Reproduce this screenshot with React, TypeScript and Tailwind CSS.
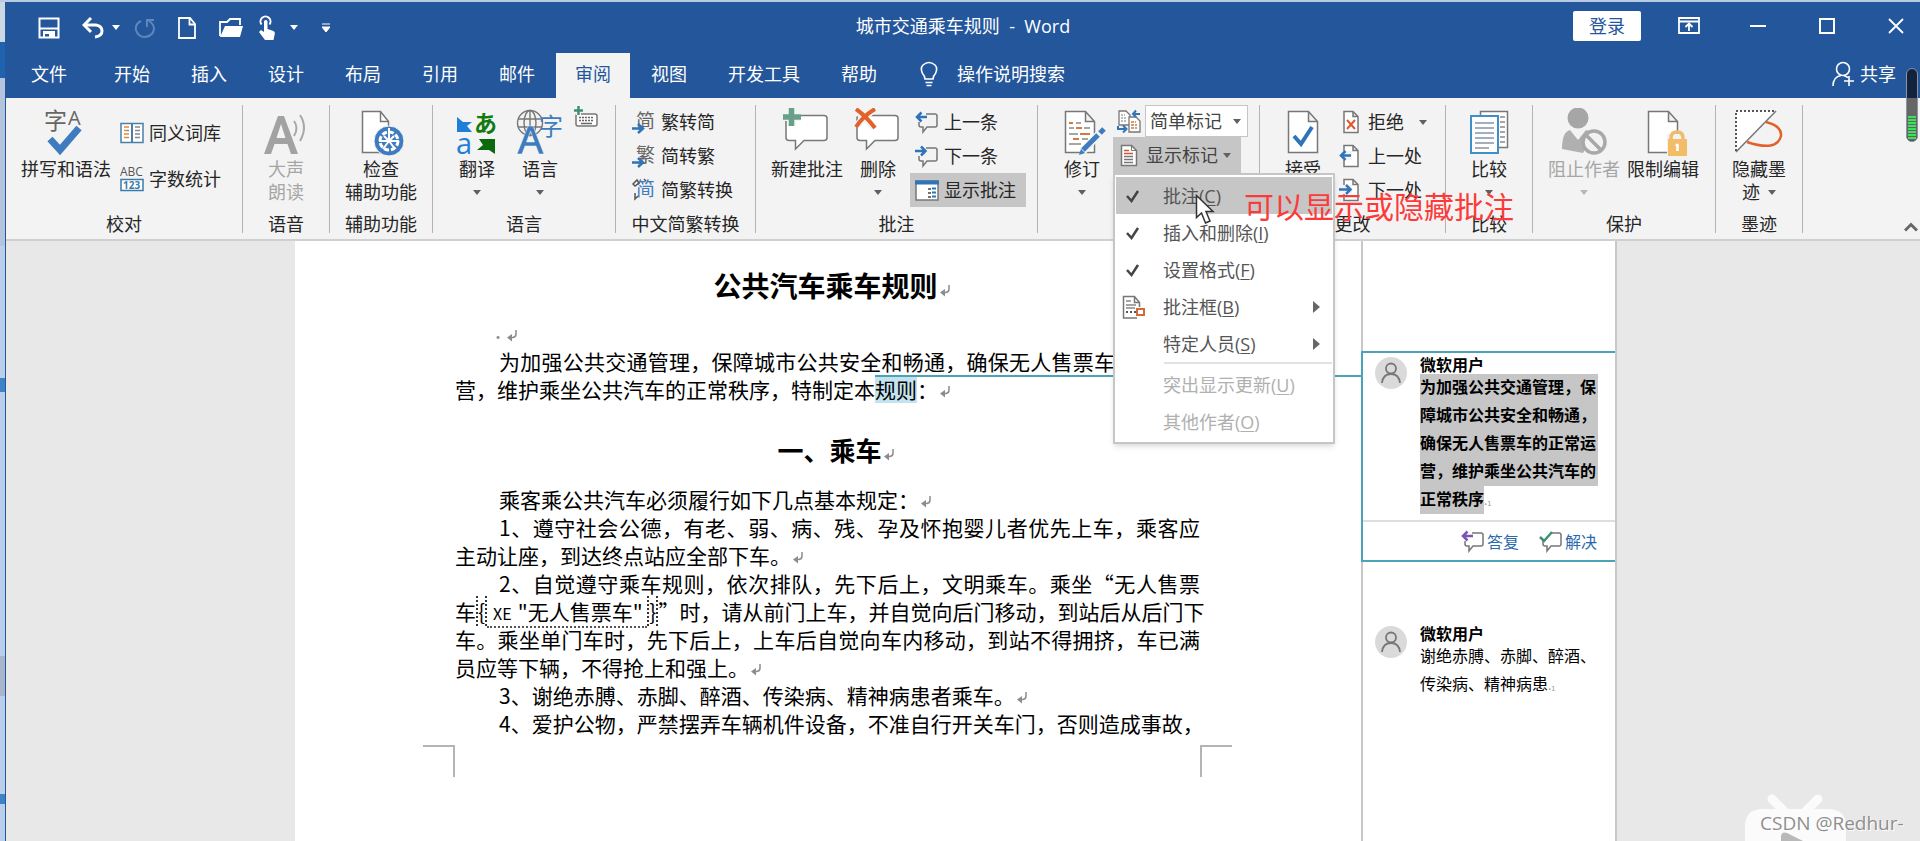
import React, { useState } from 'react';

const ui = 'font-["Open_Sans","Noto_Sans_CJK_SC",sans-serif]';

type IconProps = { children: React.ReactNode; w?: number; h?: number; className?: string };

function Icon({ children, w = 24, h = 24, className = '' }: IconProps) {
  return (
    <svg width={w} height={h} viewBox={`0 0 ${w} ${h}`} fill="none" className={`shrink-0 ${className}`} aria-hidden="true">
      {children}
    </svg>
  );
}

function Caret({ className = 'text-[#606060]' }: { className?: string }) {
  return (
    <Icon w={8} h={5} className={className}>
      <path d="M0 0h8L4 5z" fill="currentColor" />
    </Icon>
  );
}

/* ---------- ribbon drawings ---------- */

const BigPage = () => (
  <path d="M9.5 3.5h20l9 10v31h-29z M29.5 3.5v10h9" fill="#fff" stroke="#777" strokeWidth="1.5" />
);

const SpellingIcon = () => (
  <Icon w={48} h={48}>
    <text x="2" y="21" fontSize="23" fill="#666" fontFamily="Noto Sans CJK SC">字</text>
    <text x="26" y="17" fontSize="20" fill="#666" fontFamily="Open Sans">A</text>
    <path d="M8 31l10 11L37 20" stroke="#3f7cbf" strokeWidth="7" />
  </Icon>
);

const ThesaurusIcon = () => (
  <Icon>
    <rect x="1" y="2.5" width="22" height="19" fill="#fff" stroke="#4a7fa8" strokeWidth="1.5" />
    <path d="M12 2v20" stroke="#4a7fa8" strokeWidth="2" />
    <path d="M4 6h5M4 9.500h3M4 13h5M4 16.500h5" stroke="#e08a3c" strokeWidth="1.5" />
    <path d="M7 9.500h2M15 6h5M15 9.500h5M15 13h5M15 16.500h5" stroke="#888" strokeWidth="1.5" />
  </Icon>
);

const WordCountIcon = () => (
  <Icon h={26}>
    <text x="0" y="10" fontSize="12" fill="#555" fontFamily="Open Sans">ABC</text>
    <rect x="1" y="13.5" width="22" height="11" fill="#fff" stroke="#3b7bab" strokeWidth="1.5" />
    <text x="3" y="23" fontSize="10" fontWeight="700" fill="#3b7bab" fontFamily="Open Sans">123</text>
  </Icon>
);

const ReadAloudIcon = () => (
  <Icon w={48} h={48}>
    <path d="M2 46L16 8h6l14 38h-7l-3.500-10H12.500L9 46zM14.500 30h9L19 16z" fill="#a2a2a2" />
    <path d="M32 13q5 7 0 15M38 7q8 12 0 26" stroke="#a8a8a8" strokeWidth="2" />
  </Icon>
);

const AccessibilityIcon = () => (
  <Icon w={48} h={48}>
    <path d="M5.5 3.5h18l8 10v31h-26z" fill="#fff" stroke="#777" strokeWidth="1.5" />
    <path d="M23.5 3.5v10h8" stroke="#777" strokeWidth="1.5" />
    <circle cx="32" cy="33" r="15" fill="#3f7cbf" stroke="#f3f3f3" />
    <circle cx="32" cy="33" r="9" stroke="#fff" strokeWidth="3" strokeDasharray="5 2" />
    <path d="M32 20v12M27 28l5 5 5-5M32 33l-6 8M32 33l6 8M22 33h20" stroke="#fff" strokeWidth="2" />
  </Icon>
);

const TranslateIcon = () => (
  <Icon w={48} h={48}>
    <path d="M4 9l6 5h9l-5 4 5 6H4z" fill="#1d7fd8" />
    <text x="21" y="24" fontSize="23" fontWeight="700" fill="#107c10" fontFamily="Noto Sans CJK JP">あ</text>
    <text x="3" y="46" fontSize="29" fill="#1d7fd8" fontFamily="Open Sans">a</text>
    <path d="M26 31h16v15l-6-4H24l6-5z" fill="#0b6a0b" />
  </Icon>
);

const LanguageIcon = () => (
  <Icon w={48} h={48}>
    <g stroke="#777" strokeWidth="1.4">
      <circle cx="14" cy="15" r="12.5" />
      <ellipse cx="14" cy="15" rx="6" ry="12.5" />
      <path d="M14 2v25M2 11h24M2 19h24" />
    </g>
    <path d="M1 46l11-28h5l11 28h-5l-3-8H9l-3 8zM10.500 34h8l-4-11z" fill="#3f7cbf" stroke="#f3f3f3" strokeWidth="0.5" />
    <text x="23" y="27" fontSize="24" fill="#3f7cbf" fontFamily="Noto Sans CJK SC">字</text>
  </Icon>
);

const KeyboardIcon = () => (
  <Icon>
    <rect x="2" y="8" width="21" height="12" rx="2" fill="#fff" stroke="#777" strokeWidth="1.5" />
    <path d="M5 11.500h15M5 14.500h15" stroke="#666" strokeWidth="1.5" strokeDasharray="2 1" />
    <path d="M7 17.500h11" stroke="#666" strokeWidth="1.5" />
    <path d="M4.500 0v9M0 4.500h9" stroke="#f3f3f3" strokeWidth="5" />
    <path d="M4.500 0v9M0 4.500h9" stroke="#3f8f78" strokeWidth="2.5" />
  </Icon>
);

function HanIcon({ char, color, arrow }: { char: string; color: string; arrow?: boolean }) {
  return (
    <Icon>
      <text x="4" y="18" fontSize="19" fill={color} fontFamily="Noto Sans CJK SC">{char}</text>
      {arrow ? (
        <path d="M0 18.500h9M6 14l5 4.500L6 23" stroke="#2f74b8" strokeWidth="2.5" />
      ) : (
        <path d="M1 6l4-4 2 3-4 3zM12 1l2 2M3 15v6l3-3" stroke="#555" strokeWidth="1.5" />
      )}
    </Icon>
  );
}

const BubblePath = () => (
  <path d="M6 7.500h35q3 0 3 3v19q0 3-3 3H21L12.500 41v-8.500H6q-3 0-3-3v-19q0-3 3-3z" fill="#fff" stroke="#777" strokeWidth="1.5" />
);

const NewCommentIcon = () => (
  <Icon w={48} h={48}>
    <BubblePath />
    <path d="M8.500 0v18M0 9h18" stroke="#f3f3f3" strokeWidth="8" />
    <path d="M8.500 0v18M0 9h18" stroke="#69a08c" strokeWidth="5.5" />
  </Icon>
);

const DeleteIcon = () => (
  <Icon w={48} h={48}>
    <BubblePath />
    <path d="M2 2l19 18M20 1L2 18" stroke="#f3f3f3" strokeWidth="7" />
    <path d="M2 1q10 7 19 19M21 1Q9 8 2 19" stroke="#e2612b" strokeWidth="4" />
  </Icon>
);

function SmallBubble({ dir, mark = '#2f74b8' }: { dir: 'left' | 'right' | 'check'; mark?: string }) {
  return (
    <Icon>
      <path d="M11 4h9q2 0 2 2v9q0 2-2 2h-8l-4 5v-5H6q-2 0-2-2v-3" stroke="#777" strokeWidth="1.5" />
      {dir === 'left' && <path d="M12 7H3M6.500 2.500L2 7l4.500 4.500" stroke={mark} strokeWidth="2.5" />}
      {dir === 'right' && <path d="M0 7h9M6 2.500L10.500 7 6 11.500" stroke={mark} strokeWidth="2.5" />}
      {dir === 'check' && <path d="M1 8l4 4 8-9" stroke={mark} strokeWidth="2.5" />}
    </Icon>
  );
}

const ShowCommentsIcon = () => (
  <Icon>
    <rect x="1" y="3" width="22" height="19" fill="#fff" stroke="#777" strokeWidth="1.5" />
    <path d="M0 4.500h24" stroke="#2f74b8" strokeWidth="4" />
    <path d="M13 11h3M13 15h3M13 19h3" stroke="#444" strokeWidth="1.5" />
    <path d="M17 10.500h4M17 14.500h4M17 18.500h4" stroke="#2f74b8" strokeWidth="2" />
  </Icon>
);

const TrackIcon = () => (
  <Icon w={48} h={48}>
    <path d="M7.5 3.5h20l9 10v31h-29z M27.5 3.5v10h9" fill="#fff" stroke="#777" strokeWidth="1.5" />
    <path d="M11 15h4M18 20h6M22 26h10M15 31h6" stroke="#d27a45" strokeWidth="2" />
    <path d="M18 15h5M11 20h5M26 20h6M11 26h9M24 31h6M11 36h12" stroke="#888" strokeWidth="1.5" />
    <path d="M24 44L44 23" stroke="#f3f3f3" strokeWidth="8" />
    <path d="M25 42L40 27M42 25l4-4" stroke="#3f7cbf" strokeWidth="5" />
    <path d="M21 47l2-6 4 4z" fill="#3f7cbf" />
  </Icon>
);

const MarkupViewIcon = () => (
  <Icon>
    <path d="M2 2h7l4 4v10H2z" fill="#fff" stroke="#777" strokeWidth="1.3" />
    <path d="M12 8h7l4 4v11H12z" fill="#fff" stroke="#777" strokeWidth="1.3" />
    <path d="M4 6h4M4 9h6M4 12h6" stroke="#777" strokeDasharray="2 1" />
    <path d="M14 13h5M14 16h6M14 19h6" stroke="#d27a45" strokeWidth="1.3" strokeDasharray="3 1" />
    <path d="M23 5h-6M19 1.500L16 5l3 3M1 17v3h7M6 16.500l3.500 3.500L6 23.500" stroke="#2f74b8" strokeWidth="2" />
  </Icon>
);

const ShowMarkupIcon = () => (
  <Icon>
    <path d="M4.5 2.5h10l5 5v15h-15z" fill="#fff" stroke="#777" strokeWidth="1.5" />
    <path d="M14.5 2.5v5h5" stroke="#777" />
    <path d="M7 7.500h5M7 10.500h9" stroke="#d2562b" strokeWidth="1.5" />
    <path d="M7 13.500h9M7 16.500h9M7 19.500h9" stroke="#777" strokeWidth="1.3" />
  </Icon>
);

const AcceptIcon = () => (
  <Icon w={48} h={48}>
    <BigPage />
    <path d="M15 28l7 8 11-17" stroke="#2f74b8" strokeWidth="4" />
  </Icon>
);

function SmallPage({ kind }: { kind: 'reject' | 'prev' | 'next' }) {
  return (
    <Icon>
      <path d="M5 1.500h9l5 5v16H5z M14 1.500v5h5" fill="#fff" stroke="#777" strokeWidth="1.5" />
      {kind === 'reject' && <path d="M8 10l8 9M16 10l-8 9" stroke="#e2562b" strokeWidth="2" />}
      {kind !== 'reject' && <path d="M1 11.500h12" stroke="#f3f3f3" strokeWidth="9" />}
      {kind === 'prev' && <path d="M12 11.500H3M6.500 7L2 11.500 6.500 16" stroke="#2f74b8" strokeWidth="2.5" />}
      {kind === 'next' && <path d="M0 11.500h10M7 7l4.500 4.500L7 16" stroke="#2f74b8" strokeWidth="2.5" />}
    </Icon>
  );
}

const CompareIcon = () => (
  <Icon w={48} h={48}>
    <path d="M15.5 3.5h27v36h-27z" fill="#fff" stroke="#777" strokeWidth="1.5" />
    <path d="M35 9h5M35 14h5M35 19h5M35 24h5M35 29h5M35 34h5" stroke="#888" strokeWidth="1.5" />
    <path d="M6 8h27v37H6z" fill="#fff" stroke="#3f8fc8" strokeWidth="2" />
    <path d="M10 15h19M10 20h19M10 25h19M10 30h19M10 35h19M10 40h14" stroke="#8497a8" strokeWidth="1.5" />
  </Icon>
);

const BlockIcon = () => (
  <Icon w={48} h={48}>
    <circle cx="18" cy="10" r="10.5" fill="#a6a6a6" />
    <path d="M2 41q0-17 8-19l8 10 8-10q5 1 7 6l-10 17z" fill="#b0b0b0" />
    <circle cx="34" cy="34" r="11" fill="#f3f3f3" stroke="#a8a8a8" strokeWidth="3.5" />
    <path d="M26 27l15 15" stroke="#a8a8a8" strokeWidth="3.5" />
  </Icon>
);

const RestrictIcon = () => (
  <Icon w={48} h={48}>
    <BigPage />
    <path d="M28 26h22v22H28z" fill="#f3f3f3" />
    <path d="M32 34v-4q0-6 6-6t6 6v4" stroke="#eebd6c" strokeWidth="3.5" />
    <rect x="29" y="31" width="19" height="17" fill="#f2bd66" />
    <path d="M38.500 36v7M36.500 37h3" stroke="#fff" strokeWidth="2.5" />
  </Icon>
);

const InkIcon = () => (
  <Icon w={48} h={48}>
    <path d="M1 3h40L1 43z" fill="#fff" />
    <path d="M1 43V3h40" stroke="#555" strokeWidth="2" strokeDasharray="2 2" />
    <path d="M1 44L41 3" stroke="#777" strokeWidth="1.5" />
    <path d="M31 14q16 4 15 14Q42 44 12 34" stroke="#e2612b" strokeWidth="2.5" />
  </Icon>
);

/* ---------- ribbon building blocks ---------- */

function Group({ label, className, children }: { label: string; className: string; children: React.ReactNode }) {
  return (
    <section aria-label={label} className={`flex h-32 shrink-0 flex-col justify-between border-r border-[#b4b4b4] ${className}`}>
      <div className="flex h-[102px] items-start">{children}</div>
      <div className="text-center leading-[18px] whitespace-nowrap text-[#262626]">{label}</div>
    </section>
  );
}

type BigProps = { icon: React.ReactNode; lines: string[]; caret?: boolean; disabled?: boolean; className?: string };

function BigButton({ icon, lines, caret, disabled, className = '' }: BigProps) {
  return (
    <button
      type="button"
      disabled={disabled}
      className={`flex shrink-0 flex-col items-center pt-[3px] leading-[23px] whitespace-nowrap ${disabled ? 'text-[#a6a6a6]' : 'text-[#262626]'} ${className}`}
    >
      {icon}
      <span className="mt-0.5">{lines[0]}</span>
      <span className="flex h-[23px] items-center gap-2">
        {lines[1]}
        {caret && <Caret className={disabled ? 'text-[#b8b8b8]' : 'text-[#606060]'} />}
      </span>
    </button>
  );
}

function SmallButton({ icon, text, caret, className = 'h-[34px]' }: { icon: React.ReactNode; text: string; caret?: boolean; className?: string }) {
  return (
    <button type="button" className={`flex shrink-0 items-center gap-[5px] whitespace-nowrap text-[#262626] ${className}`}>
      {icon}
      <span>{text}</span>
      {caret && <span className="pl-2.5"><Caret /></span>}
    </button>
  );
}

/* ---------- markup menu ---------- */

type Item = { text: string; hotkey: string; checked?: boolean; sub?: boolean; disabled?: boolean; icon?: boolean };

const menuItems: Item[] = [
  { text: '批注', hotkey: 'C', checked: true },
  { text: '插入和删除', hotkey: 'I', checked: true },
  { text: '设置格式', hotkey: 'F', checked: true },
  { text: '批注框', hotkey: 'B', sub: true, icon: true },
  { text: '特定人员', hotkey: 'S', sub: true },
  { text: '突出显示更新', hotkey: 'U', disabled: true },
  { text: '其他作者', hotkey: 'O', disabled: true },
];

function MarkupMenu() {
  const [hovered, setHovered] = useState('C');

  return (
    <div role="menu" className="absolute top-full left-0 z-20 w-[222px] border-2 border-[#c6c6c6] bg-white px-px py-0.5 shadow-md">
      {menuItems.map((item) => (
        <React.Fragment key={item.hotkey}>
          {item.hotkey === 'U' && <div className="mb-0.5 ml-12 h-0.5 bg-[#e1e1e1]" />}
          <button
            type="button"
            role="menuitem"
            disabled={item.disabled}
            onMouseEnter={() => setHovered(item.hotkey)}
            className={`flex h-[37px] w-full items-center pr-3 whitespace-nowrap ${hovered === item.hotkey ? 'bg-[#c6c6c6]' : ''} ${item.disabled ? 'text-[#b0b0b0]' : 'text-[#555]'}`}
          >
            <span className="flex w-[47px] shrink-0 pl-1.5">
              {item.checked && (
                <Icon>
                  <path d="M5 12l4.500 5L16 7" stroke="#444" strokeWidth="2.5" />
                </Icon>
              )}
              {item.icon && (
                <Icon>
                  <path d="M15 23H1.500V1.500h11l5 6V12M12.500 1.500v6h5" fill="#fff" stroke="#777" strokeWidth="1.5" />
                  <path d="M4 6h5M4 10h10M4 13h9" stroke="#888" strokeWidth="1.5" />
                  <path d="M4 17h10" stroke="#555" strokeWidth="2" strokeDasharray="2 2" />
                  <rect x="15" y="14" width="7" height="6" fill="#fff" stroke="#cf6b3a" strokeWidth="2" />
                </Icon>
              )}
            </span>
            <span>
              {item.text}(<u className="underline-offset-2">{item.hotkey}</u>)
            </span>
            {item.sub && (
              <Icon w={7} h={12} className="ml-auto">
                <path d="M0 0l7 6-7 6z" fill="#666" />
              </Icon>
            )}
          </button>
        </React.Fragment>
      ))}
    </div>
  );
}

/* ---------- window chrome ---------- */

function TitleBar() {
  return (
    <header className="relative flex h-[51px] items-center justify-between pb-1 text-white">
      <div className="flex items-center pt-1 pl-8">
        <button type="button" aria-label="保存">
          <Icon w={22} h={22}>
            <path d="M1.500 1.500h19v19h-19z" stroke="#fff" strokeWidth="2" />
            <path d="M2 11.500h18M6 21v-6h10v6" stroke="#fff" strokeWidth="2" />
            <path d="M7 15h8v2H7zM11 17h4v4h-4z" fill="#fff" />
          </Icon>
        </button>
        <button type="button" aria-label="撤消" className="ml-[22px] flex items-center gap-2">
          <Icon w={22} h={22}>
            <path d="M2 8h12q6 1 6 6t-7 6" stroke="#fff" strokeWidth="3" />
            <path d="M9 1L2 8l7 7" stroke="#fff" strokeWidth="3" />
          </Icon>
          <Icon w={8} h={5}><path d="M0 0h8L4 5z" fill="#fff" /></Icon>
        </button>
        <button type="button" aria-label="恢复" className="ml-3.5" disabled>
          <Icon w={22} h={22}>
            <path d="M7 4q-6 3-5 9 2 7 9 7 8-1 9-8 0-5-5-8" stroke="#5f86bd" strokeWidth="2" />
            <path d="M13 10V3h7" stroke="#5f86bd" strokeWidth="2" />
          </Icon>
        </button>
        <button type="button" aria-label="新建" className="ml-5">
          <Icon w={22} h={22}>
            <path d="M3 1h11l5 6v14H3z M13.500 1v6.500H19" stroke="#fff" strokeWidth="1.8" />
          </Icon>
        </button>
        <button type="button" aria-label="打开" className="ml-5">
          <Icon w={26} h={22}>
            <path d="M2 19V5h7l3-3h10v6" stroke="#fff" strokeWidth="1.8" />
            <path d="M7 9h18l-3 11H2z" fill="#fff" />
          </Icon>
        </button>
        <button type="button" aria-label="触摸/鼠标模式" className="ml-3 flex items-center gap-3">
          <Icon w={22} h={26}>
            <path d="M5.500 9.500a5 5 0 1 1 8 0" stroke="#fff" strokeWidth="2" />
            <path d="M8 6q2-2 3.500 0v8l6 2q2 1 1 4l-1 5H9l-6-8 2-2 3 2z" fill="#fff" />
          </Icon>
          <Icon w={8} h={5}><path d="M0 0h8L4 5z" fill="#fff" /></Icon>
        </button>
        <button type="button" aria-label="自定义快速访问工具栏" className="ml-6">
          <Icon w={8} h={10}><path d="M0 1h8M0 4h8l-4 5z" stroke="#fff" fill="#fff" /></Icon>
        </button>
      </div>

      <h1 className="absolute left-1/2 -translate-x-1/2 text-lg leading-6 whitespace-pre">城市交通乘车规则  -  Word</h1>

      <div className="flex items-center">
        <button type="button" className="h-[30px] rounded-xs bg-white px-4 text-lg leading-none text-[#24569b]">登录</button>
        <button type="button" aria-label="功能区显示选项" className="ml-[37px]">
          <Icon w={22} h={18}>
            <path d="M1 1h20v15H1zM1 4.500h20" stroke="#fff" strokeWidth="1.8" />
            <path d="M11 14V7M7.500 10L11 6.500l3.500 3.500" stroke="#fff" strokeWidth="1.8" />
          </Icon>
        </button>
        <button type="button" aria-label="最小化" className="ml-[50px]">
          <Icon w={16} h={16}><path d="M0 8h16" stroke="#fff" strokeWidth="2" /></Icon>
        </button>
        <button type="button" aria-label="最大化" className="ml-[53px]">
          <Icon w={16} h={16}><path d="M1 1h14v14H1z" stroke="#fff" strokeWidth="2" /></Icon>
        </button>
        <button type="button" aria-label="关闭" className="mr-4 ml-[53px]">
          <Icon w={16} h={16}><path d="M1 1l14 14M15 1L1 15" stroke="#fff" strokeWidth="1.8" /></Icon>
        </button>
      </div>
    </header>
  );
}

const tabs = ['开始', '插入', '设计', '布局', '引用', '邮件', '审阅', '视图', '开发工具', '帮助'];

function TabRow() {
  const [active, setActive] = useState('审阅');

  return (
    <nav className="flex h-[45px] items-stretch text-lg leading-none text-white">
      <button type="button" className="mr-[7px] pr-5 pb-1 pl-[25px]">文件</button>
      <div className="flex gap-px">
        {tabs.map((tab) => (
          <button
            key={tab}
            type="button"
            onClick={() => setActive(tab)}
            className={tab === active ? 'bg-[#f3f3f3] px-[19px] pb-1 text-[#24569b]' : 'px-5 pb-1'}
          >
            {tab}
          </button>
        ))}
      </div>
      <button type="button" className="ml-[22px] flex items-center gap-[18px] pb-1">
        <Icon w={20} h={26}>
          <path d="M6 18q0-3-2.500-5.500Q1 7 4 4q6-5 12 0 3 3 .5 8.500Q14 15 14 18zM6.500 21.500h7M7.500 24.500h5" stroke="#fff" strokeWidth="1.6" />
        </Icon>
        操作说明搜索
      </button>
      <button type="button" className="mr-6 ml-auto flex items-center gap-1 pb-1">
        <Icon w={24} h={26}>
          <circle cx="11" cy="8" r="6.5" stroke="#fff" strokeWidth="1.6" />
          <path d="M1 25q0-9 8-10.500M12 14.500l4 2M17 15v10M12 20h10" stroke="#fff" strokeWidth="1.6" />
        </Icon>
        共享
      </button>
    </nav>
  );
}

function Ribbon() {
  return (
    <div className="relative flex h-[143px] border-b-2 border-[#d0d0d0] bg-[#f3f3f3] py-[7px] text-lg leading-none">
      <Group label="校对" className="w-[237px]">
        <BigButton icon={<SpellingIcon />} lines={['拼写和语法']} className="ml-[15px]" />
        <div className="ml-[9px] flex flex-col pt-[5px]">
          <SmallButton icon={<ThesaurusIcon />} text="同义词库" className="h-[46px]" />
          <SmallButton icon={<WordCountIcon />} text="字数统计" className="h-[46px]" />
        </div>
      </Group>
      <Group label="语音" className="w-[87px]">
        <BigButton icon={<ReadAloudIcon />} lines={['大声', '朗读']} disabled className="mx-auto" />
      </Group>
      <Group label="辅助功能" className="w-[103px]">
        <BigButton icon={<AccessibilityIcon />} lines={['检查', '辅助功能']} className="mx-auto" />
      </Group>
      <Group label="语言" className="w-[183px]">
        <BigButton icon={<TranslateIcon />} lines={['翻译']} caret className="ml-5" />
        <BigButton icon={<LanguageIcon />} lines={['语言']} caret className="ml-[15px]" />
        <button type="button" aria-label="更新输入法词典" className="ml-2.5 flex pt-px"><KeyboardIcon /></button>
      </Group>
      <Group label="中文简繁转换" className="w-[140px]">
        <div className="ml-4 flex flex-col">
          <SmallButton icon={<HanIcon char="简" color="#666" arrow />} text="繁转简" />
          <SmallButton icon={<HanIcon char="繁" color="#666" arrow />} text="简转繁" />
          <SmallButton icon={<HanIcon char="简" color="#3f7cbf" />} text="简繁转换" />
        </div>
      </Group>
      <Group label="批注" className="w-[282px]">
        <BigButton icon={<NewCommentIcon />} lines={['新建批注']} className="ml-[15px]" />
        <BigButton icon={<DeleteIcon />} lines={['删除']} caret className="ml-[11px]" />
        <div className="ml-2 flex flex-col">
          <SmallButton icon={<SmallBubble dir="left" />} text="上一条" className="h-[34px] pl-[5px]" />
          <SmallButton icon={<SmallBubble dir="right" />} text="下一条" className="h-[34px] pl-[5px]" />
          <SmallButton icon={<ShowCommentsIcon />} text="显示批注" className="h-[34px] bg-[#c6c6c6] pr-2.5 pl-[5px]" />
        </div>
      </Group>
      <Group label="修订" className="w-[222px]">
        <BigButton icon={<TrackIcon />} lines={['修订']} caret className="ml-5" />
        <div className="ml-[7px] flex flex-col">
          <div className="flex h-8 items-center gap-1 pl-1">
            <MarkupViewIcon />
            <label className="relative flex items-center">
              <span className="sr-only">显示以供审阅</span>
              <select className="h-8 w-[103px] appearance-none border border-[#c6c6c6] bg-white pl-1 text-lg leading-none text-[#444] outline-none">
                <option>简单标记</option>
              </select>
              <span className="pointer-events-none absolute right-[7px]"><Caret /></span>
            </label>
          </div>
          <div className="relative">
            <button type="button" aria-haspopup="menu" className="flex h-9 items-center gap-[5px] bg-[#c6c6c6] pr-2.5 pl-1 whitespace-nowrap text-[#444]">
              <ShowMarkupIcon />
              显示标记
              <Caret />
            </button>
            <MarkupMenu />
          </div>
        </div>
      </Group>
      <Group label="更改" className="w-[186px]">
        <BigButton icon={<AcceptIcon />} lines={['接受']} className="ml-[19px]" />
        <div className="ml-3 flex flex-col">
          <SmallButton icon={<SmallPage kind="reject" />} text="拒绝" caret />
          <SmallButton icon={<SmallPage kind="prev" />} text="上一处" />
          <SmallButton icon={<SmallPage kind="next" />} text="下一处" />
        </div>
      </Group>
      <Group label="比较" className="w-[87px]">
        <BigButton icon={<CompareIcon />} lines={['比较']} caret className="mx-auto" />
      </Group>
      <Group label="保护" className="w-[183px]">
        <BigButton icon={<BlockIcon />} lines={['阻止作者']} caret disabled className="ml-[15px]" />
        <BigButton icon={<RestrictIcon />} lines={['限制编辑']} className="ml-[7px]" />
      </Group>
      <Group label="墨迹" className="w-[87px]">
        <BigButton icon={<InkIcon />} lines={['隐藏墨', '迹']} caret className="mx-auto" />
      </Group>
      <button type="button" aria-label="折叠功能区" className="mt-auto mr-0.5 ml-auto">
        <Icon w={14} h={10}><path d="M1 8.500l6-6 6 6" stroke="#666" strokeWidth="3" /></Icon>
      </button>
      <p className="pointer-events-none absolute top-[94px] left-[1238px] z-30 text-[30px] leading-[30px] whitespace-nowrap text-[#fb3b3b]">
        可以显示或隐藏批注
      </p>
    </div>
  );
}

/* ---------- document ---------- */

function Return() {
  return (
    <Icon w={10} h={12} className="ml-0.5 inline-block align-baseline text-[#8c8c8c]">
      <path d="M9 0v4q0 3-3 3.500H3" stroke="currentColor" strokeWidth="1.5" />
      <path d="M0 7.500L5 4v7.500z" fill="currentColor" />
    </Icon>
  );
}

function Line({ children, indent, full }: { children: React.ReactNode; indent?: boolean; full?: boolean }) {
  return (
    <span className={`relative block whitespace-nowrap ${indent ? 'pl-11' : ''} ${full ? 'text-justify [text-align-last:justify]' : ''}`}>
      {children}
    </span>
  );
}

function Page() {
  return (
    <article className='w-[1066px] shrink-0 bg-white pt-[26px] pr-[161px] pl-40 font-["Noto_Sans_CJK_SC",sans-serif] text-[21px] leading-7 text-black'>
      <h2 className="pl-2 text-center text-[28px] leading-9 font-bold">公共汽车乘车规则<Return /></h2>
      <p className="mt-4 pl-9 text-[#8c8c8c]"><span className="text-sm">·</span><Return /></p>
      <p>
        <Line indent full>为加强公共交通管理，保障城市公共安全和畅通，确保无人售票车的正常运</Line>
        <Line>
          营，维护乘坐公共汽车的正常秩序，特制定本
          <mark className="inline-block h-7 bg-[#c3e3ef] text-black">规则</mark>：<Return />
          <span className="absolute top-0 -right-[161px] left-[420px] h-0.5 bg-[#4ba3b9]" />
        </Line>
      </p>
      <h3 className="mt-[33px] pl-4 text-center text-[26px] leading-7 font-bold">一、乘车<Return /></h3>
      <p className="mt-[21px]">
        <Line indent>乘客乘公共汽车必须履行如下几点基本规定：<Return /></Line>
      </p>
      <p>
        <Line indent full>1、遵守社会公德，有老、弱、病、残、孕及怀抱婴儿者优先上车，乘客应</Line>
        <Line>主动让座，到达终点站应全部下车。<Return /></Line>
      </p>
      <p>
        <Line indent full>2、自觉遵守乘车规则，依次排队，先下后上，文明乘车。乘坐“无人售票</Line>
        <Line full>
          车<span className="border-x-2 border-dotted border-[#333]">{'{'}</span>
          <span className="border-b-2 border-dotted border-[#555]">
            <span className="px-1.5 text-base">XE</span>"无人售票车"{' '}
          </span>
          <span className="border-x-2 border-dotted border-[#333]">{'}'}</span>”时，请从前门上车，并自觉向后门移动，到站后从后门下
        </Line>
        <Line full>车。乘坐单门车时，先下后上，上车后自觉向车内移动，到站不得拥挤，车已满</Line>
        <Line>员应等下辆，不得抢上和强上。<Return /></Line>
      </p>
      <p>
        <Line indent>3、谢绝赤膊、赤脚、醉酒、传染病、精神病患者乘车。<Return /></Line>
      </p>
      <p>
        <Line indent full>4、爱护公物，严禁摆弄车辆机件设备，不准自行开关车门，否则造成事故，</Line>
      </p>
      <div className="-mx-8 mt-2 flex justify-between">
        <div className="size-8 border-t-2 border-r-2 border-[#b4b4b4]" />
        <div className="size-8 border-t-2 border-l-2 border-[#b4b4b4]" />
      </div>
    </article>
  );
}

function Avatar() {
  return (
    <Icon w={32} h={32} className="mt-[3px]">
      <circle cx="16" cy="16" r="16" fill="#dadada" />
      <circle cx="16" cy="11.5" r="5" stroke="#777" strokeWidth="1.8" />
      <path d="M7 26q1-9 9-9t9 9" stroke="#777" strokeWidth="1.8" />
    </Icon>
  );
}

const selectedLines = ['为加强公共交通管理，保', '障城市公共安全和畅通，', '确保无人售票车的正常运', '营，维护乘坐公共汽车的'];

function Comments() {
  return (
    <aside className='w-64 shrink-0 border-x-2 border-[#c8c8c8] bg-white pt-[110px] font-["Noto_Sans_CJK_SC",sans-serif] text-base leading-6 text-black'>
      <section className="-ml-0.5 border-2 border-r-0 border-[#4ba3b9]">
        <div className="flex gap-[13px] px-3 pt-px">
          <Avatar />
          <div className="whitespace-nowrap">
            <h4 className="leading-5 font-bold">微软用户</h4>
            <p className="font-bold">
              {selectedLines.map((line) => (
                <span key={line} className="block w-[178px] bg-[#c6c6c6] pb-1">{line}</span>
              ))}
              <span className="inline-block bg-[#c6c6c6] pb-1">正常秩序</span>
              <span className="text-xs font-normal text-[#999]">.₁</span>
            </p>
          </div>
        </div>
        <div className="mt-1.5 flex h-10 justify-end gap-5 border-t-2 border-[#dedede] pr-[18px] text-[#2b69ad]">
          <button type="button" className="flex items-center gap-0.5"><SmallBubble dir="left" mark="#7a55b5" />答复</button>
          <button type="button" className="flex items-center gap-0.5"><SmallBubble dir="check" mark="#3f8f78" />解决</button>
        </div>
      </section>
      <section className="mt-[59px] flex gap-[13px] px-3 pt-0.5">
        <Avatar />
        <div className="whitespace-nowrap">
          <h4 className="leading-5 font-bold">微软用户</h4>
          <p>
            <span className="block pb-1">谢绝赤膊、赤脚、醉酒、</span>
            传染病、精神病患<span className="text-xs text-[#999]">.₁</span>
          </p>
        </div>
      </section>
    </aside>
  );
}

/* ---------- things around and over the window ---------- */

// sliver of the window behind this one
function BackWindow() {
  return (
    <div className="flex w-[5px] shrink-0 flex-col bg-[#b9cfec]">
      <div className="h-10 bg-[#cdd7e4]" />
      <div className="h-9 bg-[#1f63ae]" />
      <div className="h-[168px] bg-[#b4c4dc]" />
      <div className="mt-[132px] h-3.5 bg-[#3f83c4]" />
      <div className="mt-[264px] h-10 bg-[#a9b5cc]" />
      <div className="mt-[98px] h-2.5 bg-[#3f83c4]" />
    </div>
  );
}

function Pointer() {
  return (
    <Icon w={22} h={32} className="pointer-events-none absolute top-[194px] left-[1195px] z-30">
      <path d="M1.500 1.500v22l5-4.500 4 10 4.500-2-4-9.500h7z" fill="#fff" stroke="#333" strokeWidth="1.5" />
    </Icon>
  );
}

function LevelMeter() {
  return (
    <div className="absolute top-[68px] right-0.5 z-30 flex h-[74px] w-3 flex-col overflow-hidden rounded-md border border-[#8c94a0] bg-[#12223f]">
      <div className="mt-[29px] flex flex-1 flex-col items-center justify-end gap-px bg-[#666] pb-0.5">
        {Array.from({ length: 8 }, (_, i) => (
          <span key={i} className="h-0.5 w-2 bg-[#3ee05a]" />
        ))}
      </div>
    </div>
  );
}

function Watermark() {
  return (
    <div className="absolute right-0 bottom-0 flex h-[50px] w-[180px] items-end">
      <svg width="106" height="50" viewBox="0 0 106 50" fill="none" className="absolute bottom-0 left-0" aria-hidden="true">
        <path d="M32 8l14 14M78 8L64 22" stroke="#fbfbfb" strokeWidth="9" strokeLinecap="round" />
        <path d="M5 50V36q0-18 18-18h65q18 0 18 18v14z" fill="#fbfbfb" />
        <path d="M41 50v-5q1-5 6-3l16 8z" fill="#b9b9b9" />
      </svg>
      <p className="relative ml-5 h-[46px] pt-3.5 text-[19px] leading-7 whitespace-nowrap text-[#8e8e8e] [text-shadow:1px_1px_0_#fff]">CSDN @Redhur-</p>
    </div>
  );
}

export default function App() {
  return (
    <div className={`relative flex min-h-screen overflow-hidden bg-[#b9cbe3] pt-0.5 ${ui}`}>
      <BackWindow />
      <div className="flex min-w-0 flex-1 flex-col border-l border-[#24569b] bg-[#24569b]">
        <TitleBar />
        <TabRow />
        <Ribbon />
        <main className="flex flex-1 justify-center bg-[#e8e8e8] pr-[14px]">
          <Page />
          <Comments />
        </main>
      </div>
      <Pointer />
      <LevelMeter />
      <Watermark />
    </div>
  );
}
